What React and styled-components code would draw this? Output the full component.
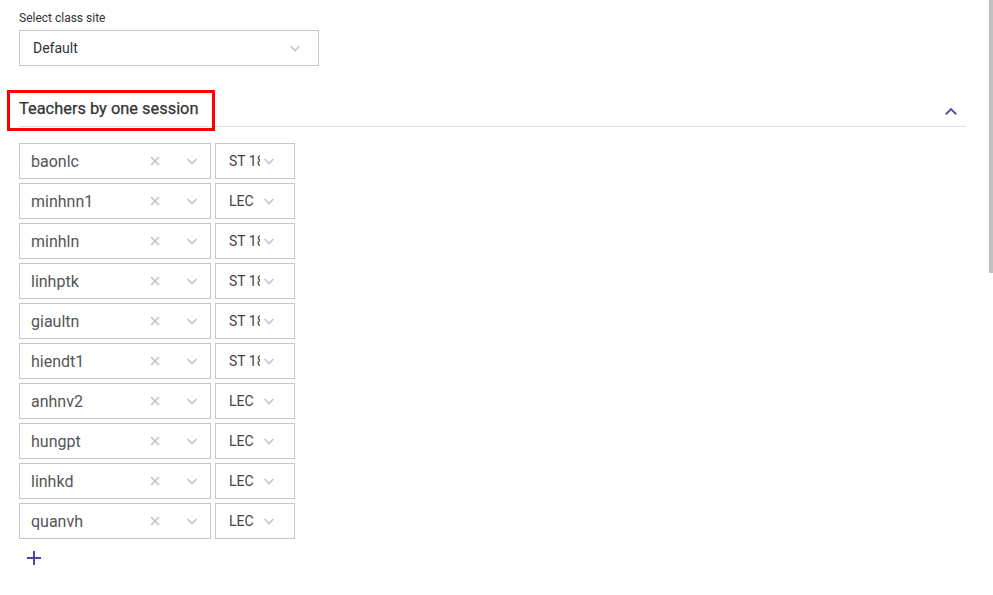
import React from 'react';
import styled, { createGlobalStyle } from 'styled-components';

const GlobalStyle = createGlobalStyle`
  html, body {
    margin: 0;
    padding: 0;
    background: #fff;
    overflow: hidden;
  }
  body {
    font-family: Roboto, "Liberation Sans", Arial, sans-serif;
    color: #333;
  }
`;

const Page = styled.div`
  position: relative;
  height: 595px;
  padding: 10px 27px 0 19px;
  box-sizing: border-box;
`;

const Scrollbar = styled.div`
  position: absolute;
  top: 0;
  right: 0;
  width: 4px;
  height: 273px;
  background: #c1c1c1;
`;

const Label = styled.div`
  font-size: 12px;
  line-height: 16px;
  color: #333;
  margin-bottom: 4px;
`;

const SiteSelect = styled.div`
  width: 300px;
  height: 36px;
  box-sizing: border-box;
  border: 1px solid #c8c8c8;
  display: flex;
  align-items: center;
  justify-content: space-between;
  padding: 0 17px 0 13px;
  font-size: 14px;
  color: #333;
`;

const SectionHeader = styled.div`
  position: relative;
  margin-top: 24px;
  height: 36px;
  display: flex;
  align-items: center;
  justify-content: space-between;
  border-bottom: 1px solid #dedede;
  padding-right: 8px;
`;

const Title = styled.div`
  font-size: 16.4px;
  font-weight: 400;
  color: #333;
  -webkit-text-stroke: 0.25px #333;
`;

const Toggle = styled.span`
  display: flex;
  margin-top: 7px;
`;

const Highlight = styled.div`
  position: absolute;
  left: -12px;
  top: 0;
  width: 208px;
  height: 41px;
  box-sizing: border-box;
  border: 3px solid #ff0000;
  pointer-events: none;
`;

const Rows = styled.div`
  margin-top: 16px;
  display: flex;
  flex-direction: column;
  gap: 4px;
`;

const Row = styled.div`
  display: flex;
  gap: 4px;
`;

const Box = styled.div`
  width: ${(p) => p.$w}px;
  height: 36px;
  box-sizing: border-box;
  border: 1px solid #c8c8c8;
  display: flex;
  align-items: center;
`;

const Name = styled.div`
  flex: 1;
  padding-left: 11px;
  font-size: 16px;
  color: #555;
`;

const IconSlot = styled.div`
  width: ${(p) => p.$w}px;
  display: flex;
  justify-content: center;
  align-items: center;
`;

const Role = styled.div`
  margin-left: 13px;
  width: 31px;
  overflow: hidden;
  white-space: nowrap;
  font-size: 14px;
  color: #444;
`;

const AddButton = styled.div`
  margin-top: 11px;
  margin-left: 7px;
  width: 16px;
  height: 16px;
  display: flex;
  align-items: center;
  justify-content: center;
`;

const Chevron = ({ up, color = '#c4c4c4', size = 12 }) => (
  <svg width={size} height={size} viewBox="0 0 12 12">
    <path
      d={up ? 'M1.5 8 L6 3.5 L10.5 8' : 'M1.5 4 L6 8.5 L10.5 4'}
      fill="none"
      stroke={color}
      strokeWidth="1.6"
    />
  </svg>
);

const Cross = () => (
  <svg width="10" height="10" viewBox="0 0 10 10">
    <path d="M1 1 L9 9 M9 1 L1 9" stroke="#c4c4c4" strokeWidth="1.6" fill="none" />
  </svg>
);

const Plus = () => (
  <svg width="14" height="14" viewBox="0 0 14 14">
    <path d="M7 0 V14 M0 7 H14" stroke="#4a44ad" strokeWidth="2" fill="none" />
  </svg>
);

const teachers = [
  ['baonlc', 'ST 18'],
  ['minhnn1', 'LEC'],
  ['minhln', 'ST 18'],
  ['linhptk', 'ST 18'],
  ['giaultn', 'ST 18'],
  ['hiendt1', 'ST 18'],
  ['anhnv2', 'LEC'],
  ['hungpt', 'LEC'],
  ['linhkd', 'LEC'],
  ['quanvh', 'LEC'],
];

export default function App() {
  return (
    <>
      <GlobalStyle />
      <Page>
        <Label>Select class site</Label>
        <SiteSelect>
          <span>Default</span>
          <Chevron />
        </SiteSelect>

        <SectionHeader>
          <Title>Teachers by one session</Title>
          <Toggle>
            <Chevron up color="#4a44ad" size={14} />
          </Toggle>
          <Highlight />
        </SectionHeader>

        <Rows>
          {teachers.map(([name, role]) => (
            <Row key={name}>
              <Box $w={192}>
                <Name>{name}</Name>
                <IconSlot $w={38}>
                  <Cross />
                </IconSlot>
                <IconSlot $w={36}>
                  <Chevron />
                </IconSlot>
              </Box>
              <Box $w={80}>
                <Role>{role}</Role>
                <IconSlot $w={18}>
                  <Chevron />
                </IconSlot>
              </Box>
            </Row>
          ))}
        </Rows>

        <AddButton>
          <Plus />
        </AddButton>
        <Scrollbar />
      </Page>
    </>
  );
}
